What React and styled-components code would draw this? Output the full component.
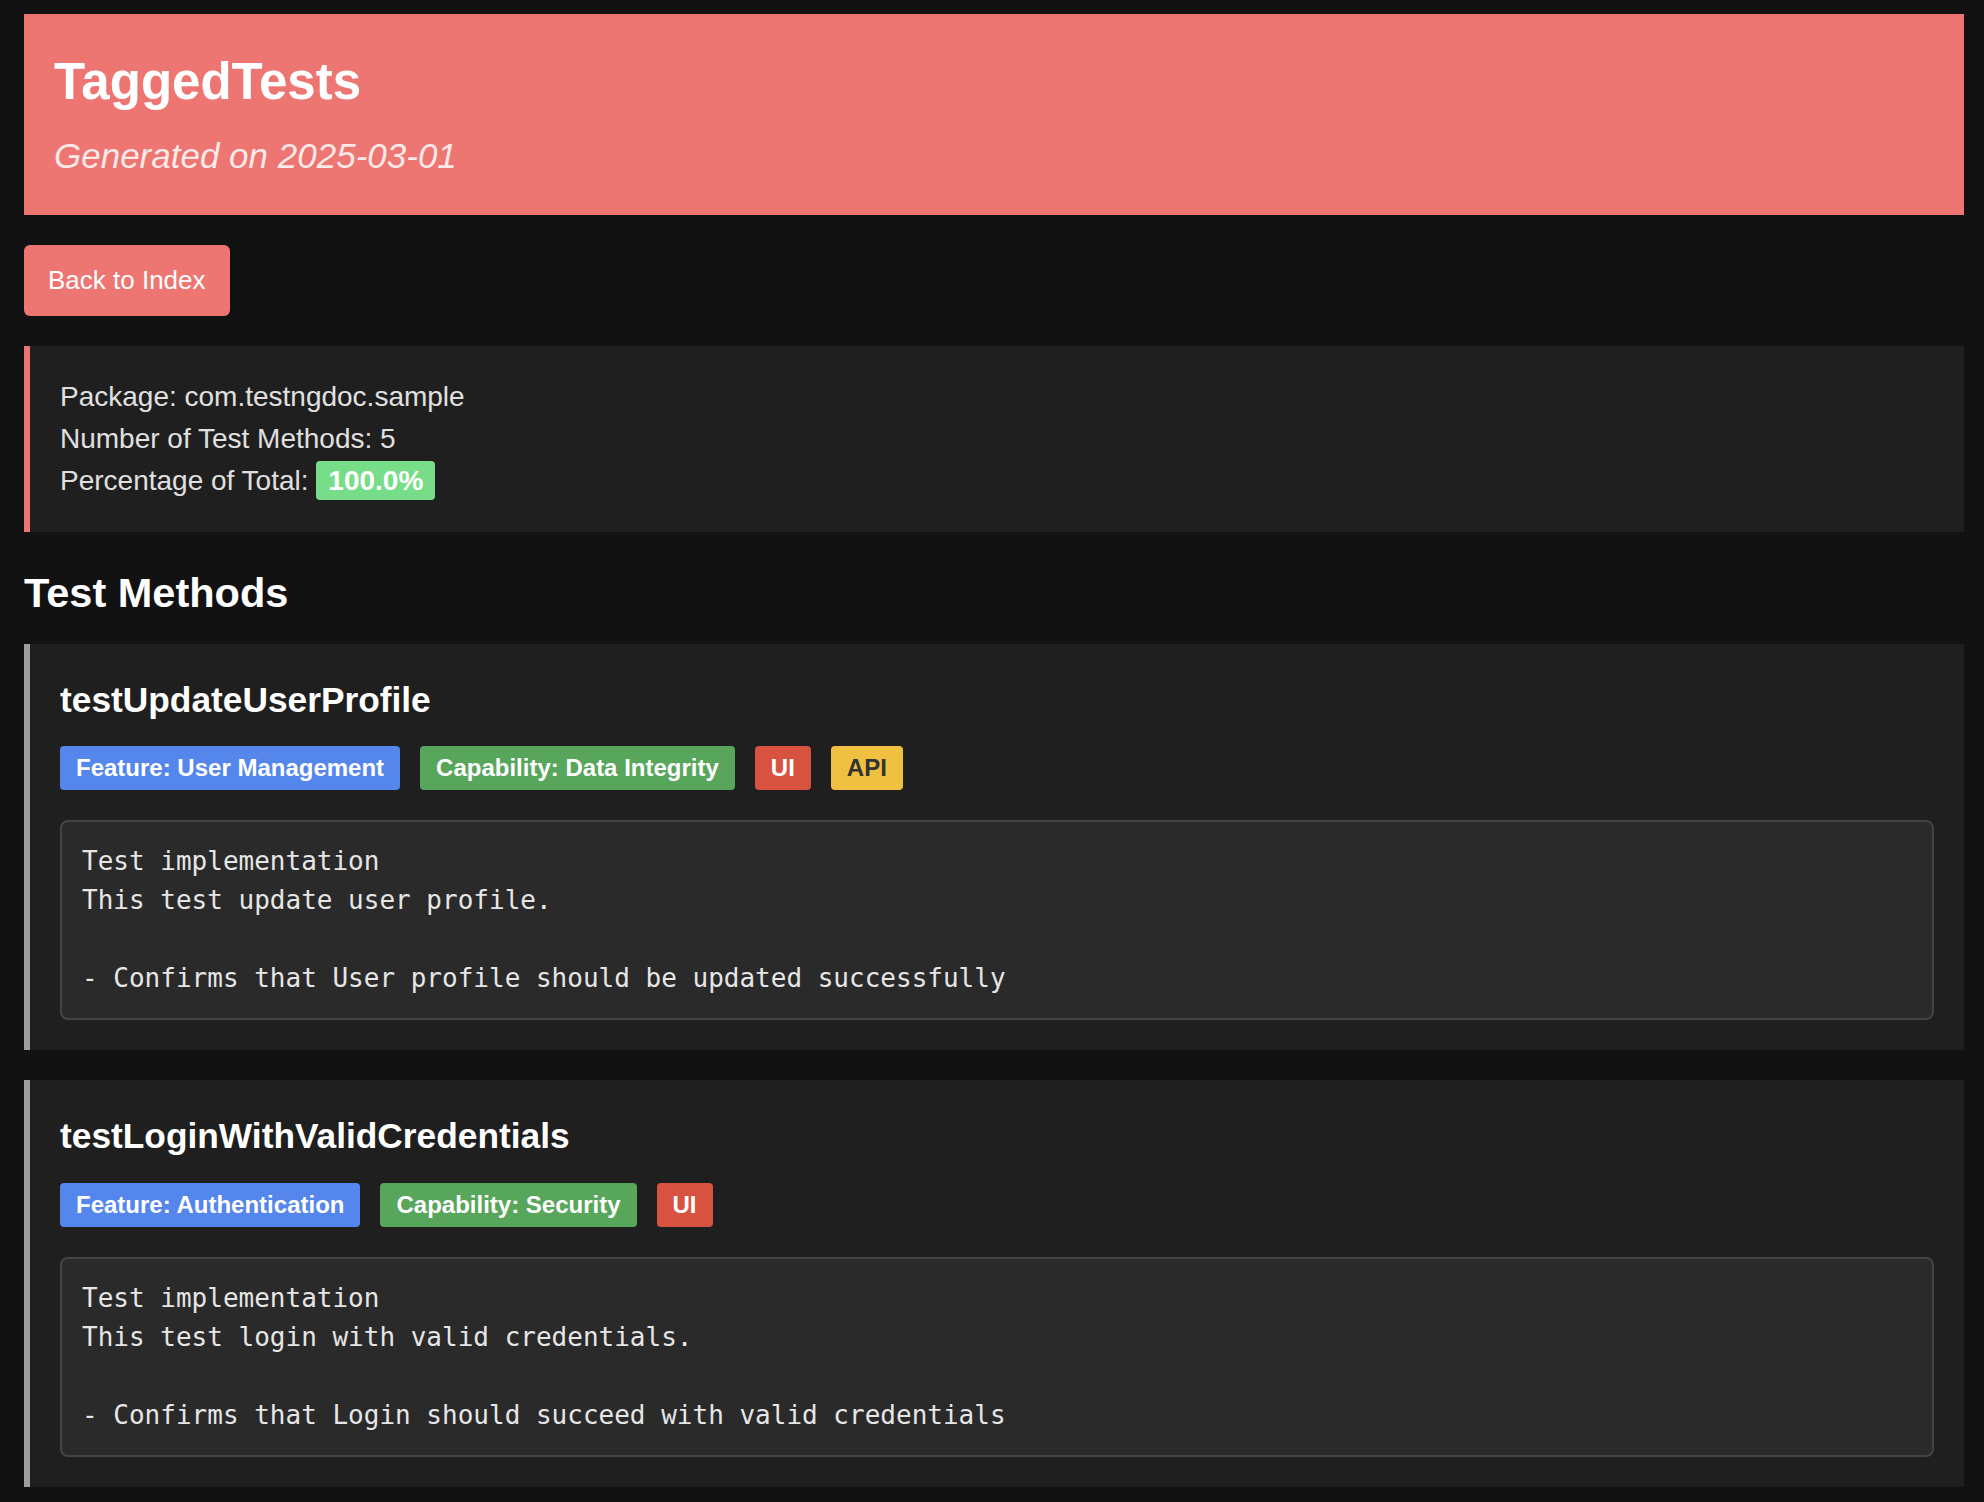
import React from 'react';
import styled, { createGlobalStyle } from 'styled-components';

const GlobalStyle = createGlobalStyle`
  html, body {
    margin: 0;
    background: #121212;
  }
  body {
    padding: 14px 20px 14px 24px;
    font-family: "Liberation Sans", Arial, Helvetica, sans-serif;
    font-size: 28px;
    line-height: 1.5;
    color: #e0e0e0;
  }
  * { box-sizing: border-box; }
`;

/* red page header */
const Header = styled.header`
  background: #ee7672;
  padding: 30px 30px 32px;
  color: #fff;
`;

const Title = styled.h1`
  margin: 0 0 11px;
  font-size: 51px;
  font-weight: 700;
  line-height: 75px;
`;

const Subtitle = styled.p`
  margin: 0;
  font-size: 35px;
  font-style: italic;
  color: rgba(255, 255, 255, 0.86);
`;

const BackButton = styled.a`
  display: inline-block;
  margin-top: 30px;
  padding: 16px 24px;
  background: #ee7672;
  color: #fff;
  font-size: 26px;
  line-height: 39px;
  border-radius: 6px;
  text-decoration: none;
  cursor: pointer;
`;

/* summary block */
const InfoBox = styled.section`
  margin-top: 30px;
  background: #1f1f1f;
  border-left: 6px solid #ee7672;
  padding: 30px;
`;

const InfoLine = styled.div`
  line-height: 42px;
`;

const Percent = styled.span`
  display: inline-block;
  padding: 2px 12px;
  line-height: 35px;
  background: #77dd88;
  color: #fff;
  font-weight: 700;
  border-radius: 4px;
`;

const SectionTitle = styled.h2`
  margin: 30px 0 20px;
  font-size: 41.5px;
  font-weight: 700;
  line-height: 62px;
  color: #fff;
`;

/* one test method card */
const MethodCard = styled.article`
  background: #1f1f1f;
  border-left: 6px solid #9e9e9e;
  padding: 30px;
  & + & {
    margin-top: 30px;
  }
`;

const MethodName = styled.h3`
  margin: 0 0 20px;
  font-size: 35.3px;
  font-weight: 700;
  line-height: 52.5px;
  color: #fff;
`;

const TagRow = styled.div`
  display: flex;
  flex-wrap: wrap;
  gap: 20px;
  margin-bottom: 30px;
`;

const tagColors = {
  feature: { bg: '#5486ec', fg: '#fff' },
  capability: { bg: '#57a65b', fg: '#fff' },
  ui: { bg: '#d85240', fg: '#fff' },
  api: { bg: '#f0c042', fg: '#333' },
};

const Tag = styled.span`
  display: inline-block;
  padding: 4px 16px;
  font-size: 24px;
  line-height: 36px;
  font-weight: 700;
  border-radius: 4px;
  background: ${p => tagColors[p.$kind].bg};
  color: ${p => tagColors[p.$kind].fg};
`;

const Description = styled.pre`
  margin: 0;
  background: #2a2a2a;
  border: 2px solid #444;
  border-radius: 8px;
  padding: 20px;
  font-family: "DejaVu Sans Mono", Menlo, "Liberation Mono", monospace;
  font-size: 26px;
  line-height: 39px;
  color: #e6e6e6;
  white-space: pre-wrap;
`;

const methods = [
  {
    name: 'testUpdateUserProfile',
    tags: [
      { kind: 'feature', label: 'Feature: User Management' },
      { kind: 'capability', label: 'Capability: Data Integrity' },
      { kind: 'ui', label: 'UI' },
      { kind: 'api', label: 'API' },
    ],
    text: 'Test implementation\nThis test update user profile.\n\n- Confirms that User profile should be updated successfully',
  },
  {
    name: 'testLoginWithValidCredentials',
    tags: [
      { kind: 'feature', label: 'Feature: Authentication' },
      { kind: 'capability', label: 'Capability: Security' },
      { kind: 'ui', label: 'UI' },
    ],
    text: 'Test implementation\nThis test login with valid credentials.\n\n- Confirms that Login should succeed with valid credentials',
  },
];

const App = () => {
  return (
    <>
      <GlobalStyle />
      <Header>
        <Title>TaggedTests</Title>
        <Subtitle>Generated on 2025-03-01</Subtitle>
      </Header>

      <BackButton>Back to Index</BackButton>

      <InfoBox>
        <InfoLine>Package: com.testngdoc.sample</InfoLine>
        <InfoLine>Number of Test Methods: 5</InfoLine>
        <InfoLine>
          Percentage of Total: <Percent>100.0%</Percent>
        </InfoLine>
      </InfoBox>

      <SectionTitle>Test Methods</SectionTitle>

      {methods.map(m => (
        <MethodCard key={m.name}>
          <MethodName>{m.name}</MethodName>
          <TagRow>
            {m.tags.map(t => (
              <Tag key={t.label} $kind={t.kind}>{t.label}</Tag>
            ))}
          </TagRow>
          <Description>{m.text}</Description>
        </MethodCard>
      ))}
    </>
  );
};

export default App;
